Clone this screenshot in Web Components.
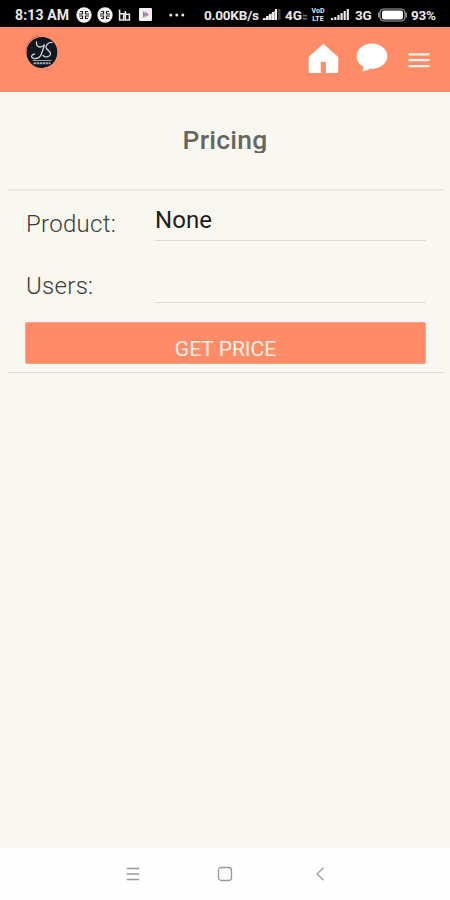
<!DOCTYPE html>
<html lang="en">
<head>
<meta charset="utf-8">
<meta name="viewport" content="width=device-width, initial-scale=1">
<title>Pricing</title>
<style>
    html, body {
        margin: 0;
        height: 100%;
        overflow: hidden;
        font-family: Roboto, "Liberation Sans", sans-serif;
    }
</style>
</head>
<body>
<phone-screen>
    <status-bar slot="status"></status-bar>
    <app-header slot="header"></app-header>
    <page-title>Pricing</page-title>
    <price-form>
        <form-row label="Product:">None</form-row>
        <form-row label="Users:"></form-row>
        <price-button slot="action">GET PRICE</price-button>
    </price-form>
    <nav-bar slot="nav"></nav-bar>
</phone-screen>
<script>
    class BaseElement extends HTMLElement {
        constructor() {
            super();
            this.attachShadow({ mode: "open" });
            const template = document.createElement("template");
            template.innerHTML = this.render();
            this.shadowRoot.append(template.content.cloneNode(true));
        }
    }

    class PhoneScreen extends BaseElement {
        render() {
            return `
                <style>
                    :host {
                        display: flex;
                        flex-direction: column;
                        height: 100vh;
                        background: #f9f8f0;
                    }
                    main { flex: 1; }
                </style>
                <slot name="status"></slot>
                <slot name="header"></slot>
                <main><slot></slot></main>
                <slot name="nav"></slot>`;
        }
    }

    class StatusBar extends BaseElement {
        render() {
            const clover = `
                <svg width="16" height="16" viewBox="0 0 16 16">
                    <circle cx="8" cy="8" r="7.7" fill="#f4f4f4"/>
                    <path d="M4 4.500h2.500V7M12 4.500H9.500V7M4 11.500h2.500V9M12 11.500H9.500V9M3 7h4M9 7h4M3 9h4M9 9h4" fill="none" stroke="#222" stroke-width="1.200"/>
                </svg>`;
            return `
                <style>
                    :host {
                        display: flex;
                        align-items: center;
                        height: 27px;
                        padding: 2px 0 0 15px;
                        box-sizing: border-box;
                        background: #000;
                        color: #e9e9e9;
                        font-size: 13.5px;
                        font-weight: 700;
                        line-height: 16px;
                        white-space: nowrap;
                    }
                    span, svg { flex: none; display: block; }
                    .time { width: 61px; font-size: 14px; letter-spacing: 0.15px; }
                    .clovers { display: flex; gap: 5px; width: 42px; }
                    .speed { width: 57px; margin-left: 19px; letter-spacing: -0.2px; }
                    .g4 { width: 18px; margin-left: 4px; letter-spacing: -0.1px; }
                    .volte { margin-left: 3px; width: 16px; font-size: 7px; text-align: center; }
                    .volte b { display: block; height: 8px; line-height: 8px; font-weight: 700; }
                    .g3 { width: 18px; margin-left: 6px; letter-spacing: -0.2px; }
                    .percent { margin-left: 4px; letter-spacing: -0.2px; }
                </style>
                <span class="time">8:13 AM</span>
                <div class="clovers">${clover}${clover}</div>
                <svg width="13" height="14" viewBox="0 0 13 14" fill="none" stroke="#e9e9e9" stroke-width="1.600">
                    <path d="M1.600 1.500V12h4V5.800h-4M7.400 3V12h4V6.300h-4M5.600 5.800h2"/>
                </svg>
                <svg width="13" height="13" viewBox="0 0 13 13" style="margin-left:8px">
                    <rect width="13" height="13" rx="1" fill="#f1eff2"/>
                    <path d="M4 3v7l3-3.5z" fill="#668fc2"/><path d="M5.2 3.2 10 6.5 5.2 9.8 7 6.5z" fill="#db6376"/>
                </svg>
                <svg width="16" height="4" viewBox="0 0 16 4" style="margin-left:17px" fill="#e9e9e9">
                    <circle cx="1.8" cy="2" r="1.500"/><circle cx="7.8" cy="2" r="1.500"/><circle cx="13.8" cy="2" r="1.500"/>
                </svg>
                <span class="speed">0.00KB/s</span>
                <svg width="18" height="13" viewBox="0 0 18 13" style="margin-left:2px">
                    <path d="M0 12 14 1v11z" fill="#aaa"/>
                    <path d="M0 12h2v-2H0zM3 12h2V8H3zM6 12h2V6H6zM9 12h2V4H9zM12 12h2V1h-2z" fill="#eee"/>
                    <path d="M15 1h2.500v11H15z" fill="#3c3c3c"/>
                </svg>
                <span class="g4">4G</span>
                <svg width="4" height="5" viewBox="0 0 4 5" fill="#777" style="margin-top:5px"><path d="M0 0h4v1.500H0zM0 3h4v1.500H0z"/></svg>
                <span class="volte"><b>VoD</b><b>LTE</b></span>
                <svg width="18" height="13" viewBox="0 0 18 13" style="margin-left:5px" fill="#e9e9e9">
                    <path d="M0 12h2.200v-2H0zM3.200 12h2.200V9H3.200zM6.400 12h2.200V7H6.400zM9.500 12h2.200V5H9.500zM12.600 12h2.200V3h-2.200zM15.700 12h2.200V1h-2.200z"/>
                </svg>
                <span class="g3">3G</span>
                <svg width="29" height="14" viewBox="0 0 29 14" style="margin-left:5px">
                    <rect x="2" y="1" width="25" height="12" rx="4" fill="none" stroke="#aaa" stroke-width="1.200"/>
                    <rect x="4" y="2.600" width="21" height="8.800" rx="2" fill="#fff"/>
                    <path d="M.7 4.500v5M28.200 4.500v5" stroke="#aaa" stroke-width="1.200"/>
                </svg>
                <span class="percent">93%</span>`;
        }
    }

    class AppHeader extends BaseElement {
        render() {
            return `
                <style>
                    :host {
                        display: flex;
                        align-items: flex-start;
                        height: 65px;
                        padding: 0 20px 0 24px;
                        box-sizing: border-box;
                        background: #ff8c68;
                    }
                    svg { display: block; flex: none; }
                    .logo { margin: 7px auto 0 0; }
                    .home { margin-top: 16px; }
                    .chat { margin: 16px 0 0 17px; }
                    .menu { margin: 25px 0 0 20px; }
                </style>
                <svg class="logo" width="36" height="37" viewBox="0 0 36 37" fill="none">
                    <circle cx="18" cy="18.5" r="15.500" fill="#101820"/>
                    <path d="M2 20C1 10 7 3 15 2" stroke="#ed5863" stroke-width="1"/>
                    <path d="M33 12C36 22 31 33 20 34" stroke="#d99a71" stroke-width="1"/>
                    <g stroke="#d1d4d4" stroke-width="1.300" stroke-linecap="round">
                        <path d="M12.500 8c-.5 3 1 5 3.500 5 2 0 3.500-1 4.500-2.500-1.500 5-2.500 9-4.500 12-2 2.500-6.500 2.500-8 1-1.300-1.500.5-3 2.500-3.500"/>
                        <path d="M28 8.500c-3.500-.3-6.500 2.500-6 5 .5 2.700 5 3.500 4.500 6.500-.5 3-5 4-7.500 1.500"/>
                    </g>
                    <path d="M8.500 26.500h19" stroke="#9da2a5" stroke-width="1"/>
                    <path d="M9.500 29.200h17" stroke="#9da2a5" stroke-width="2" stroke-dasharray="2.500 .5"/>
                </svg>
                <svg class="home" width="31" height="31" viewBox="0 0 31 31">
                    <path d="M15.300.8.7 14v14.600c0 .8.5 1.300 1.300 1.300h10.700V20c0-.8.5-1.300 1.300-1.300h2.600c.8 0 1.300.5 1.300 1.300v9.900h11c.8 0 1.300-.5 1.300-1.300V14z" fill="#fff"/>
                </svg>
                <svg class="chat" width="32" height="30" viewBox="0 0 32 30">
                    <path d="M16 .6C7.500.6.700 6.200.700 13.200c0 4.300 2.500 8 6.400 10.300.500 2-.200 3.500-.700 5.200 3.200-.6 5.700-2 7.600-3.200l2 .2c8.500 0 15.300-5.600 15.300-12.500S24.500.6 16 .6z" fill="#fff"/>
                </svg>
                <svg class="menu" width="22" height="16" viewBox="0 0 22 16">
                    <path d="M.5 2.300h21M.5 8.200h21M.5 14.100h21" stroke="#fff3ee" stroke-width="2.300"/>
                </svg>`;
        }
    }

    class PageTitle extends BaseElement {
        render() {
            return `
                <style>
                    :host {
                        display: flex;
                        justify-content: center;
                        height: 97px;
                        padding-top: 36px;
                        box-sizing: border-box;
                    }
                    /* the heading box is shorter than its line, so descenders are cut */
                    div {
                        height: 25px;
                        overflow: hidden;
                        font-size: 26.500px;
                        line-height: 24px;
                        font-weight: 500;
                        letter-spacing: 0.2px;
                        color: #666761;
                    }
                </style>
                <div><slot></slot></div>`;
        }
    }

    class PriceForm extends BaseElement {
        render() {
            return `
                <style>
                    :host {
                        display: block;
                        margin: 0 6px 0 8px;
                        padding: 0 18px 8px 17px;
                        border-top: 2px solid #eae9e3;
                        border-bottom: 1px solid #dfded8;
                    }
                </style>
                <slot></slot>
                <slot name="action"></slot>`;
        }
    }

    class FormRow extends BaseElement {
        render() {
            return `
                <style>
                    :host {
                        display: grid;
                        grid-template-columns: 130px 1fr;
                        height: 62px;
                        font-size: 24px;
                        line-height: 28px;
                    }
                    label {
                        padding-top: 19px;
                        padding-left: 1px;
                        color: #3c3c39;
                        font-weight: 300;
                        letter-spacing: 0.3px;
                    }
                    .field {
                        height: 50px;
                        padding-top: 15px;
                        box-sizing: border-box;
                        border-bottom: 1px solid #dddcd6;
                        color: #1c1c1b;
                        letter-spacing: 0.1px;
                    }
                </style>
                <label></label>
                <div class="field"><slot></slot></div>`;
        }

        connectedCallback() {
            this.shadowRoot.querySelector("label").textContent = this.getAttribute("label");
        }
    }

    class PriceButton extends BaseElement {
        render() {
            return `
                <style>
                    :host { display: block; margin-top: 7px; }
                    button {
                        display: block;
                        width: 100%;
                        height: 42px;
                        padding: 11px 0 0;
                        border: 1px solid #ffa182;
                        border-radius: 2px;
                        background: #ff8c66;
                        color: #fff0e8;
                        font: 400 21px/24px Roboto, sans-serif;
                    }
                </style>
                <button><slot></slot></button>`;
        }
    }

    class NavBar extends BaseElement {
        render() {
            return `
                <style>
                    :host {
                        display: flex;
                        align-items: center;
                        height: 52px;
                        padding: 0 0 1px 126px;
                        box-sizing: border-box;
                        background: #fefefe;
                    }
                    svg { display: block; fill: none; stroke: #999; stroke-width: 1.300; }
                </style>
                <svg width="14" height="14" viewBox="0 0 14 14"><path d="M.7 1.500h12.500M.7 7h12.500M.7 12.500h12.500"/></svg>
                <svg width="16" height="16" viewBox="0 0 16 16" style="margin-left:77px"><rect x="1.500" y="1.500" width="13" height="13" rx="3"/></svg>
                <svg width="10" height="14" viewBox="0 0 10 14" style="margin-left:82px"><path d="M8.500.8 2 7l6.500 6.200"/></svg>`;
        }
    }

    customElements.define("phone-screen", PhoneScreen);
    customElements.define("status-bar", StatusBar);
    customElements.define("app-header", AppHeader);
    customElements.define("page-title", PageTitle);
    customElements.define("price-form", PriceForm);
    customElements.define("form-row", FormRow);
    customElements.define("price-button", PriceButton);
    customElements.define("nav-bar", NavBar);
</script>
</body>
</html>
